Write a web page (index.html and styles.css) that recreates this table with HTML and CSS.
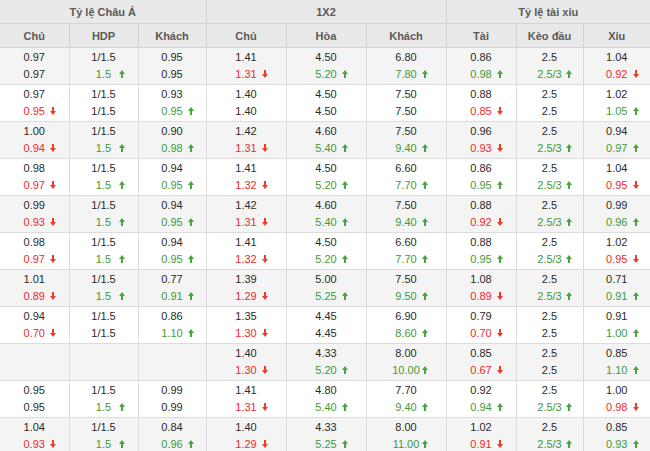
FILE: index.html
```html
<!DOCTYPE html>
<html lang="vi">
<head>
<meta charset="utf-8">
<title>Tỷ lệ kèo</title>
<link rel="stylesheet" href="styles.css">
</head>
<body>
<table class="odds">
  <colgroup>
    <col class="c69"><col class="c69"><col class="c68">
    <col class="c80"><col class="c80"><col class="c80">
    <col class="c70"><col class="c67"><col class="c67">
  </colgroup>
  <thead>
    <tr class="h1">
      <th colspan="3">Tỷ lệ Châu Á</th>
      <th colspan="3">1X2</th>
      <th colspan="3">Tỷ lệ tài xỉu</th>
    </tr>
    <tr class="h2">
      <th>Chủ</th><th>HDP</th><th>Khách</th>
      <th>Chủ</th><th>Hòa</th><th>Khách</th>
      <th>Tài</th><th>Kèo đầu</th><th>Xỉu</th>
    </tr>
  </thead>
  <tbody>
    <tr>
      <td>0.97<br>0.97</td><td>1/1.5<br><span class="u">1.5</span></td><td>0.95<br>0.95</td>
      <td>1.41<br><span class="d">1.31</span></td><td>4.50<br><span class="u">5.20</span></td><td>6.80<br><span class="u">7.80</span></td>
      <td>0.86<br><span class="u">0.98</span></td><td>2.5<br><span class="u">2.5/3</span></td><td>1.04<br><span class="d">0.92</span></td>
    </tr>
    <tr>
      <td>0.97<br><span class="d">0.95</span></td><td>1/1.5<br>1/1.5</td><td>0.93<br><span class="u">0.95</span></td>
      <td>1.40<br>1.40</td><td>4.50<br>4.50</td><td>7.50<br>7.50</td>
      <td>0.88<br><span class="d">0.85</span></td><td>2.5<br>2.5</td><td>1.02<br><span class="u">1.05</span></td>
    </tr>
    <tr>
      <td>1.00<br><span class="d">0.94</span></td><td>1/1.5<br><span class="u">1.5</span></td><td>0.90<br><span class="u">0.98</span></td>
      <td>1.42<br><span class="d">1.31</span></td><td>4.60<br><span class="u">5.40</span></td><td>7.50<br><span class="u">9.40</span></td>
      <td>0.96<br><span class="d">0.93</span></td><td>2.5<br><span class="u">2.5/3</span></td><td>0.94<br><span class="u">0.97</span></td>
    </tr>
    <tr>
      <td>0.98<br><span class="d">0.97</span></td><td>1/1.5<br><span class="u">1.5</span></td><td>0.94<br><span class="u">0.95</span></td>
      <td>1.41<br><span class="d">1.32</span></td><td>4.50<br><span class="u">5.20</span></td><td>6.60<br><span class="u">7.70</span></td>
      <td>0.86<br><span class="u">0.95</span></td><td>2.5<br><span class="u">2.5/3</span></td><td>1.04<br><span class="d">0.95</span></td>
    </tr>
    <tr>
      <td>0.99<br><span class="d">0.93</span></td><td>1/1.5<br><span class="u">1.5</span></td><td>0.94<br><span class="u">0.95</span></td>
      <td>1.42<br><span class="d">1.31</span></td><td>4.60<br><span class="u">5.40</span></td><td>7.50<br><span class="u">9.40</span></td>
      <td>0.88<br><span class="d">0.92</span></td><td>2.5<br><span class="u">2.5/3</span></td><td>0.99<br><span class="u">0.96</span></td>
    </tr>
    <tr>
      <td>0.98<br><span class="d">0.97</span></td><td>1/1.5<br><span class="u">1.5</span></td><td>0.94<br><span class="u">0.95</span></td>
      <td>1.41<br><span class="d">1.32</span></td><td>4.50<br><span class="u">5.20</span></td><td>6.60<br><span class="u">7.70</span></td>
      <td>0.88<br><span class="u">0.95</span></td><td>2.5<br><span class="u">2.5/3</span></td><td>1.02<br><span class="d">0.95</span></td>
    </tr>
    <tr>
      <td>1.01<br><span class="d">0.89</span></td><td>1/1.5<br><span class="u">1.5</span></td><td>0.77<br><span class="u">0.91</span></td>
      <td>1.39<br><span class="d">1.29</span></td><td>5.00<br><span class="u">5.25</span></td><td>7.50<br><span class="u">9.50</span></td>
      <td>1.08<br><span class="d">0.89</span></td><td>2.5<br><span class="u">2.5/3</span></td><td>0.71<br><span class="u">0.91</span></td>
    </tr>
    <tr>
      <td>0.94<br><span class="d">0.70</span></td><td>1/1.5<br>1/1.5</td><td>0.86<br><span class="u">1.10</span></td>
      <td>1.35<br><span class="d">1.30</span></td><td>4.45<br>4.45</td><td>6.90<br><span class="u">8.60</span></td>
      <td>0.79<br><span class="d">0.70</span></td><td>2.5<br>2.5</td><td>0.91<br><span class="u">1.00</span></td>
    </tr>
    <tr>
      <td></td><td></td><td></td>
      <td>1.40<br><span class="d">1.30</span></td><td>4.33<br><span class="u">5.20</span></td><td>8.00<br><span class="u">10.00</span></td>
      <td>0.85<br><span class="d">0.67</span></td><td>2.5<br>2.5</td><td>0.85<br><span class="u">1.10</span></td>
    </tr>
    <tr>
      <td>0.95<br>0.95</td><td>1/1.5<br><span class="u">1.5</span></td><td>0.99<br>0.99</td>
      <td>1.41<br><span class="d">1.31</span></td><td>4.80<br><span class="u">5.40</span></td><td>7.70<br><span class="u">9.40</span></td>
      <td>0.92<br><span class="u">0.94</span></td><td>2.5<br><span class="u">2.5/3</span></td><td>1.00<br><span class="d">0.98</span></td>
    </tr>
    <tr>
      <td>1.04<br><span class="d">0.93</span></td><td>1/1.5<br><span class="u">1.5</span></td><td>0.84<br><span class="u">0.96</span></td>
      <td>1.40<br><span class="d">1.29</span></td><td>4.33<br><span class="u">5.25</span></td><td>8.00<br><span class="u">11.00</span></td>
      <td>1.02<br><span class="d">0.91</span></td><td>2.5<br><span class="u">2.5/3</span></td><td>0.85<br><span class="u">0.93</span></td>
    </tr>
  </tbody>
</table>
</body>
</html>
```
FILE: styles.css
```css
html, body {
  margin: 0;
  padding: 0;
  background: #ffffff;
}

.odds {
  width: 650px;
  table-layout: fixed;
  border-collapse: collapse;
  font-family: "Liberation Sans", Arial, sans-serif;
  font-size: 11px;
  color: #2a2a2a;
}

.c69 { width: 69px; }
.c68 { width: 68px; }
.c80 { width: 80px; }
.c70 { width: 70px; }
.c67 { width: 67px; }

.odds th {
  background: #e9e9e9;
  color: #5a5a5a;
  font-weight: bold;
  font-size: 11px;
  text-align: center;
  border: 1px solid #d3d3d3;
  padding: 0;
}

.odds .h1 th {
  height: 23px;
  border-top: 0;
}

.odds .h2 th {
  height: 23px;
}

.odds th:first-child,
.odds td:first-child {
  border-left: 0;
}

.odds th:last-child,
.odds td:last-child {
  border-right: 0;
}

.odds td {
  height: 36px;
  padding: 0;
  text-align: center;
  vertical-align: middle;
  line-height: 17px;
  border: 1px solid #dcdcdc;
}

.odds tbody tr:nth-child(odd) td {
  background: #f4f4f4;
}

.u, .d {
  position: relative;
}

.u { color: #3e9a36; }
.d { color: #ec2a2a; }

.u::before, .d::before {
  content: "";
  position: absolute;
  left: calc(50% + 16px);
  width: 0;
  height: 0;
  border-left: 3px solid transparent;
  border-right: 3px solid transparent;
}

.u::after, .d::after {
  content: "";
  position: absolute;
  left: calc(50% + 18px);
  width: 2px;
  height: 4px;
}

.u::before {
  top: 2px;
  border-bottom: 4px solid #4aa43f;
}
.u::after {
  top: 6px;
  background: #4aa43f;
}

.d::before {
  top: 6px;
  border-top: 4px solid #ee3b2b;
}
.d::after {
  top: 2px;
  background: #ee3b2b;
}
```
